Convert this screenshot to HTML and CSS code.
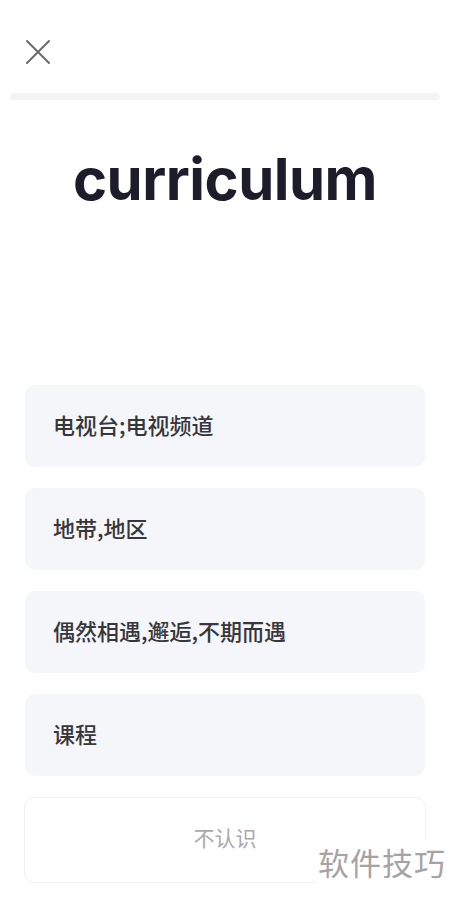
FILE: index.html
```html
<!DOCTYPE html>
<html lang="zh-CN">
<head>
    <meta charset="UTF-8">
    <meta name="viewport" content="width=device-width, initial-scale=1.0">
    <title>单词测试</title>
    <link rel="stylesheet" href="styles.css">
</head>
<body>

<div class="page">
    <div class="topbar">
        <button class="close" aria-label="关闭">
            <svg width="26" height="26" viewBox="0 0 26 26">
                <path d="M2 2 L24 24 M24 2 L2 24" stroke="#6b6b6e" stroke-width="2" stroke-linecap="round" fill="none"/>
            </svg>
        </button>
    </div>

    <div class="progress"><div class="progress-fill"></div></div>

    <h1 class="word">curriculum</h1>

    <div class="options">
        <button class="option">电视台;电视频道</button>
        <button class="option">地带,地区</button>
        <button class="option">偶然相遇,邂逅,不期而遇</button>
        <button class="option">课程</button>
        <button class="skip">不认识</button>
    </div>

    <div class="watermark">软件技巧</div>
</div>

</body>
</html>
```

FILE: styles.css
```css
body {
    margin: 0;
    background-color: #fff;
    font-family: "Noto Sans CJK SC", "Noto Sans", sans-serif;
}

.page {
    position: relative;
    width: 450px;
    height: 898px;
    overflow: hidden;
}

.topbar {
    height: 93px;
    padding-left: 25px;
    box-sizing: border-box;
    padding-top: 39px;
}

.close {
    border: none;
    background: none;
    padding: 0;
    cursor: pointer;
    display: block;
}

.progress {
    margin: 0 10px;
    height: 7px;
    border-radius: 4px;
    background-color: #f4f4f6;
}

.progress-fill {
    width: 0;
    height: 100%;
}

.word {
    margin: 44px 0 0;
    font-family: Inter, Roboto, sans-serif;
    font-weight: 700;
    font-size: 58px;
    line-height: 70px;
    text-align: center;
    color: #1d1c2b;
    letter-spacing: -0.5px;
}

.options {
    margin-top: 171px;
    padding: 0 25px;
    display: flex;
    flex-direction: column;
    gap: 21px;
}

.option {
    height: 82px;
    border: none;
    border-radius: 10px;
    background-color: #f5f6fa;
    padding: 0 0 5px 28px;
    text-align: left;
    font-family: "Noto Sans CJK SC", sans-serif;
    font-size: 22px;
    font-weight: 500;
    color: #36363b;
    cursor: pointer;
}

.skip {
    height: 86px;
    margin: 0 -1px;
    border: 1px solid #f0f0f2;
    border-radius: 10px;
    background-color: #fff;
    padding: 0 0 6px;
    font-family: "Noto Sans CJK SC", sans-serif;
    font-size: 21px;
    color: #a8a8ac;
    cursor: pointer;
}

.watermark {
    position: absolute;
    left: 314px;
    top: 839px;
    padding: 0 4px;
    background-color: #fff;
    font-size: 31px;
    line-height: 46px;
    color: #a4a4a4;
    letter-spacing: 1px;
}
```
